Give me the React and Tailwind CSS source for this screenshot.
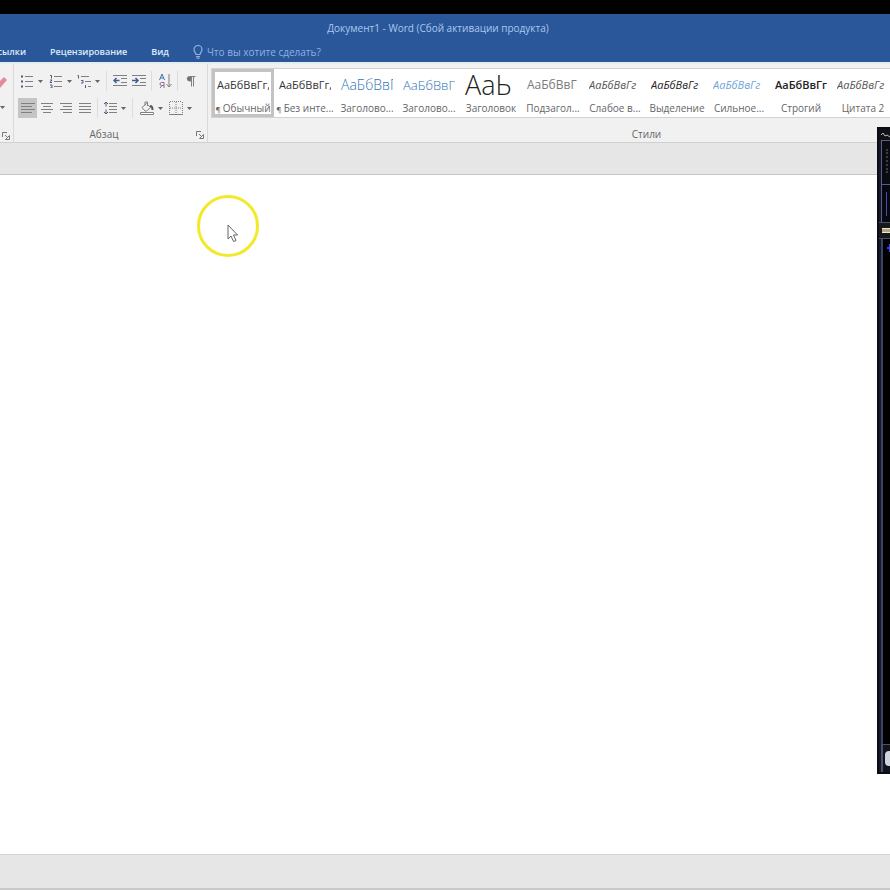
const TABS = ["Рецензирование", "Вид"];

const STYLES = [
  { name: "Обычный", mark: true, sample: "АаБбВвГг,", look: "text-[11px] text-[#333333]" },
  { name: "Без инте...", mark: true, sample: "АаБбВвГг,", look: "text-[11px] text-[#333333]" },
  { name: "Заголово...", sample: "АаБбВвГг", look: "text-[14px] font-light text-[#2e74b5]" },
  { name: "Заголово...", sample: "АаБбВвГ", look: "text-[13px] font-light text-[#2e74b5]" },
  { name: "Заголовок", sample: "АаЬ", look: "text-[27px] font-light text-[#222222]" },
  { name: "Подзагол...", sample: "АаБбВвГ", look: "text-[12px] text-[#7a7a7a]" },
  { name: "Слабое в...", sample: "АаБбВвГг", look: "text-[11px] italic text-[#555555]" },
  { name: "Выделение", sample: "АаБбВвГг", look: "text-[11px] italic text-[#222222]" },
  { name: "Сильное...", sample: "АаБбВвГг", look: "text-[11px] italic text-[#6ea6d8]" },
  { name: "Строгий", sample: "АаБбВвГг,", look: "text-[11px] font-semibold text-[#222222]" },
  { name: "Цитата 2", sample: "АаБбВвГг", look: "text-[11px] italic text-[#555555]" },
];

function Icon({ children }) {
  return (
    <svg viewBox="0 0 14 14" className="h-3.5 w-3.5 shrink-0" fill="none" stroke="#808080" strokeWidth="1">
      {children}
    </svg>
  );
}

function Caret() {
  return (
    <svg viewBox="0 0 5 3" className="h-[3px] w-[5px] shrink-0">
      <path d="M0 0h5L2.5 3z" fill="#666666" />
    </svg>
  );
}

function Tool({ label, active, children }) {
  return (
    <button
      type="button"
      aria-label={label}
      className={`flex h-5 w-[19px] items-center justify-center ${active ? "bg-[#c5c5c5]" : ""}`}
    >
      <Icon>{children}</Icon>
    </button>
  );
}

function SplitTool({ label, children }) {
  return (
    <button type="button" aria-label={label} className="flex h-5 w-7 items-center gap-1 pl-0.5">
      <Icon>{children}</Icon>
      <Caret />
    </button>
  );
}

function Separator() {
  return <div className="mx-[3px] h-5 w-px bg-[#dcdcdc]" />;
}

function Launcher({ label }) {
  return (
    <button type="button" aria-label={label} className="flex h-3 w-3 items-center justify-center">
      <svg viewBox="0 0 8 8" className="h-2 w-2" fill="none" stroke="#777777">
        <path d="M.5 5V.5H5M3 3l3 3M7.500 3.500v4h-4z" />
      </svg>
    </button>
  );
}

function ParagraphGroup() {
  return (
    <section className="flex w-[194px] shrink-0 flex-col border-r border-[#d9d9d9] pl-1 pt-[7px]">
      <div className="flex items-center">
        <SplitTool label="Маркеры">
          <path d="M5 2.500h8M5 7.500h8M5 12.500h8" />
          <path d="M1 2.500h2M1 7.500h2M1 12.500h2" stroke="#4b5c7d" strokeWidth="2" />
        </SplitTool>
        <div className="w-px" />
        <SplitTool label="Нумерация">
          <path d="M5 2.500h8M5 7.500h8M5 12.500h8" />
          <path d="M1 1.500h1.500v3M1 6h2L1 8.500h2M1 11h2v3H1" stroke="#4b5c7d" />
        </SplitTool>
        <SplitTool label="Многоуровневый список">
          <path d="M4 2.500h8M8 7.500h6M11 12.500h3" />
          <path d="M.5 1.500h1v3M4 6.500h2v2.500H4M8.500 11v3" stroke="#4b5c7d" />
        </SplitTool>
        <Separator />
        <Tool label="Уменьшить отступ">
          <path d="M0 1.500h14M8 4.500h6M8 8.500h6M0 11.500h14" />
          <path d="M6.500 6.500H1M3.500 4L1 6.500 3.500 9" stroke="#3f5f93" strokeWidth="1.500" />
        </Tool>
        <Tool label="Увеличить отступ">
          <path d="M0 1.500h14M8 4.500h6M8 8.500h6M0 11.500h14" />
          <path d="M0 6.500h6M3.500 4L6 6.500 3.500 9" stroke="#3f5f93" strokeWidth="1.500" />
        </Tool>
        <Separator />
        <Tool label="Сортировка">
          <path d="M1.500 6L4 0l2.500 6M2.500 4h3" stroke="#4574b3" />
          <path d="M6 14V8.500H3.500a1.500 1.500 0 000 3H6M4 11.500L2 14" stroke="#8a6a9c" />
          <path d="M11 0v12.500M8.500 10l2.500 3 2.500-3" />
        </Tool>
        <Separator />
        <Tool label="Показать все знаки">
          <path d="M7 2.500H5.500a2.200 2.200 0 000 4.500H7z" fill="#707070" />
          <path d="M7.500 2v10.500M9.500 2v10.500M5.500 2.500h6" />
        </Tool>
      </div>

      <div className="mt-[7px] flex items-center">
        <Tool label="По левому краю" active>
          <path d="M0 2.500h14M0 5.500h11M0 8.500h14M0 11.500h11" />
        </Tool>
        <Tool label="По центру">
          <path d="M1 2.500h12M3 5.500h8M1 8.500h12M3 11.500h8" />
        </Tool>
        <Tool label="По правому краю">
          <path d="M1 2.500h12M4 5.500h9M1 8.500h12M4 11.500h9" />
        </Tool>
        <Tool label="По ширине">
          <path d="M1 2.500h12M1 5.500h12M1 8.500h12M1 11.500h12" />
        </Tool>
        <Separator />
        <SplitTool label="Интервал">
          <path d="M6 2.500h8M6 5.500h8M6 8.500h8M6 11.500h8" />
          <path d="M3 1v4.500M1 3l2-2 2 2M3 8.500V13M1 11l2 2 2-2" stroke="#4b5c7d" />
        </SplitTool>
        <Separator />
        <div className="w-0.5" />
        <SplitTool label="Заливка">
          <path d="M2 6.500l4.500-4 4 4-4 3.500H5zM5 4.500V1h2.500v4" />
          <path d="M10 5c2 0 2.500 1.500 2.500 4" stroke="#555555" strokeWidth="2" />
          <path d="M.5 11.500h13v2H.5z" fill="#ffffff" />
        </SplitTool>
        <div className="w-px" />
        <SplitTool label="Границы">
          <path d="M.5 1v12M13.500 1v12M1 .5h12M7 1v12M1 7h12" strokeDasharray="1 1" />
          <path d="M0 13.500h14" />
        </SplitTool>
      </div>

      <div className="mt-[9px] flex h-4 items-center">
        <span className="flex-1 pr-1 text-center">Абзац</span>
        <Launcher label="Параметры абзаца" />
        <div className="w-px" />
      </div>
    </section>
  );
}

function StylesGroup() {
  return (
    <section className="min-w-0 flex-1 pl-[3px] pt-1">
      <div className="flex h-[50px] overflow-hidden border-y border-l border-[#d2d2d2] bg-white">
        {STYLES.map((style, i) => (
          <button
            key={i}
            type="button"
            className={`flex w-[62px] shrink-0 flex-col items-center overflow-hidden whitespace-nowrap ${
              i === 0 ? "outline-3 -outline-offset-3 outline-[#c3c3c3]" : ""
            }`}
          >
            <span className={`flex h-8 w-[52px] items-center overflow-hidden leading-8 ${style.look}`}>
              {style.sample}
            </span>
            <span className="h-[14px] leading-[14px]">
              {style.mark && <span className="text-[8px]">¶ </span>}
              {style.name}
            </span>
          </button>
        ))}
      </div>
      <div className="mt-2 flex h-4 items-center justify-center pl-[192px]">Стили</div>
    </section>
  );
}

function RecorderWindow() {
  return (
    <aside className="absolute right-0 top-[127px] flex h-[647px] w-[13px] flex-col overflow-hidden border-2 border-r-0 border-[#0b0c14] bg-[#15182a]">
      <div className="flex h-[11px] items-center bg-[#101218] pl-0.5">
        <svg viewBox="0 0 9 6" className="h-[6px] w-[9px]" fill="none" stroke="#b9bcc4">
          <path d="M0 3l2-2 2 3 2-1 3 2" />
        </svg>
      </div>
      <div className="ml-0.5 h-[44px] border-l border-t border-[#5a5e80] bg-[#0b0c12] pl-1 pt-2">
        <div className="h-6 border-l-2 border-dotted border-[#3a3c46]" />
      </div>
      <div className="ml-0.5 flex h-[38px] items-center border-l border-t border-[#5a5e80] bg-[#080812] pl-1">
        <div className="h-6 w-px bg-[#4a4ea0]" />
      </div>
      <div className="flex h-[17px] items-center border-y border-[#4d5064] bg-[#17181c] pl-[3px]">
        <div className="h-[5px] w-2 border-y border-[#efe8bd] bg-[#b0a888]" />
      </div>
      <div className="ml-0.5 flex-1 border-l-2 border-[#3c4266] bg-black pl-1 pt-1">
        <svg viewBox="0 0 6 10" className="h-2.5 w-1.5" fill="none" stroke="#3b41ff" strokeWidth="2">
          <path d="M0 5h6M3 1v8" />
        </svg>
      </div>
      <div className="ml-0.5 flex h-[28px] items-center border-l-2 border-t border-[#4b4f6c] bg-[#12131d] pl-0.5">
        <div className="h-[15px] w-2 rounded-l-sm bg-[#cdd3df]" />
      </div>
    </aside>
  );
}

export default function App() {
  return (
    <div className="relative flex min-h-screen flex-col overflow-hidden bg-white font-['Open_Sans','Noto_Sans',sans-serif] text-[10px] text-[#666666]">
      <div className="h-[14px] bg-black" />

      {/* Title bar and tabs */}
      <header className="bg-[#2a579a]">
        <h1 className="flex h-7 items-center justify-center pr-[14px] text-[#a9c8ee]">
          Документ1 - Word (Сбой активации продукта)
        </h1>
        <nav className="flex h-5 items-center text-[9px] font-semibold text-[#dcebfa]">
          <div className="flex w-[26px] shrink-0 justify-end overflow-hidden">
            <button type="button">Ссылки</button>
          </div>
          {TABS.map((tab) => (
            <button key={tab} type="button" className="ml-6">
              {tab}
            </button>
          ))}
          <label className="ml-6 flex items-center gap-1 text-[10px] font-normal text-[#8fb2e0]">
            <svg viewBox="0 0 10 14" className="h-3.5 w-2.5" fill="none" stroke="#8fb2e0" strokeWidth="1.200">
              <path d="M3 9.500C3 8 1 7 1 4.500a4 4 0 018 0C9 7 7 8 7 9.500zM3 11.500h4M3.500 13.200h3" />
            </svg>
            <input
              type="text"
              aria-label="Помощник"
              placeholder="Что вы хотите сделать?"
              className="w-32 bg-transparent outline-none placeholder:text-[#8fb2e0]"
            />
          </label>
        </nav>
      </header>

      {/* Ribbon */}
      <div className="flex h-[81px] border-b border-t-2 border-b-[#d0d0d0] border-t-[#e4edf0] bg-[#f1f1f1]">
        <section className="flex w-[14px] shrink-0 flex-col border-r border-[#d9d9d9] pt-3">
          <svg viewBox="0 0 8 12" className="h-3 w-2">
            <path d="M0 5l4-4 3 3-7 8z" fill="#e58a98" />
          </svg>
          <div className="mt-[18px] flex h-1">
            <Caret />
          </div>
          <div className="mt-5">
            <Launcher label="Параметры шрифта" />
          </div>
        </section>
        <ParagraphGroup />
        <StylesGroup />
      </div>

      <div className="h-8 border-b border-[#c6c6c6] bg-[#e6e6e6]" />

      {/* Page */}
      <main className="relative flex-1 bg-white">
        <svg viewBox="0 0 62 62" className="absolute left-[197px] top-5 h-[62px] w-[62px]" fill="none">
          <circle cx="31" cy="31" r="29.500" stroke="#f3e92c" strokeWidth="3" />
          <path d="M31 30v14l3-3 2.500 5.500 2.500-1-2.500-5.500h4z" fill="#ffffff" stroke="#666666" />
        </svg>
      </main>

      <footer className="h-9 border-b-2 border-t border-b-[#c9c9c9] border-t-[#d4d4d4] bg-[#e6e6e6]" />

      <RecorderWindow />
    </div>
  );
}
